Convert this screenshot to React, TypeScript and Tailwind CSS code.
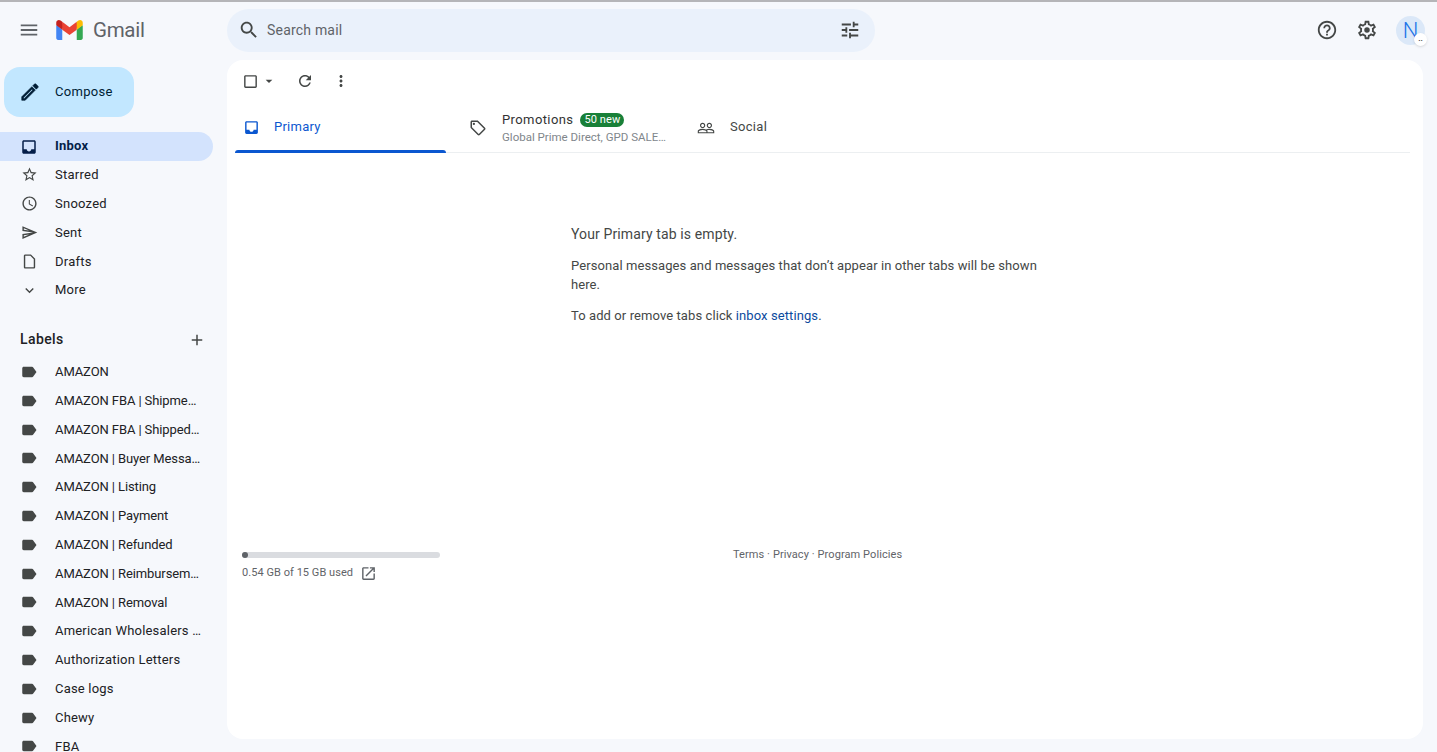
type IconProps = { d: string; className?: string };

function Icon({ d, className = "" }: IconProps) {
  return (
    <svg className={className} viewBox="0 0 24 24" fill="currentColor">
      <path d={d} />
    </svg>
  );
}

const paths = {
  menu: "M3 18h18v-2H3v2zm0-5h18v-2H3v2zm0-7v2h18V6H3z",
  search:
    "M15.5 14h-.79l-.28-.27C15.41 12.59 16 11.11 16 9.5 16 5.91 13.09 3 9.5 3S3 5.91 3 9.5 5.91 16 9.5 16c1.61 0 3.09-.59 4.23-1.57l.27.28v.79l5 4.99L20.49 19l-4.99-5zm-6 0C7.01 14 5 11.99 5 9.5S7.01 5 9.5 5 14 7.01 14 9.5 11.99 14 9.5 14z",
  tune: "M3 17v2h6v-2H3zM3 5v2h10V5H3zm10 16v-2h8v-2h-8v-2h-2v6h2zM7 9v2H3v2h4v2h2V9H7zm14 4v-2H11v2h10zm-6-4h2V7h4V5h-4V3h-2v6z",
  inbox:
    "M19 3H4.99c-1.11 0-1.98.89-1.98 2L3 19c0 1.1.88 2 1.99 2H19c1.1 0 2-.9 2-2V5c0-1.11-.9-2-2-2zm0 12h-4c0 1.66-1.35 3-3 3s-3-1.34-3-3H4.99V5H19v10z",
  star: "M22 9.24l-7.19-.62L12 2 9.19 8.63 2 9.24l5.46 4.73L5.82 21 12 17.27 18.18 21l-1.63-7.03L22 9.24zM12 15.4l-3.76 2.27 1-4.28-3.32-2.88 4.38-.38L12 6.1l1.71 4.04 4.38.38-3.32 2.88 1 4.28L12 15.4z",
  clock:
    "M11.99 2C6.47 2 2 6.48 2 12s4.47 10 9.99 10C17.52 22 22 17.52 22 12S17.52 2 11.99 2zM12 20c-4.42 0-8-3.58-8-8s3.58-8 8-8 8 3.58 8 8-3.58 8-8 8zm.5-13H11v6l5.25 3.15.75-1.23-4.5-2.67z",
  send: "M4.01 6.03l7.51 3.22-7.52-1 .01-2.22m7.5 8.72L4 17.97v-2.22l7.51-1M2.01 3L2 10l15 2-15 2 .01 7L23 12 2.01 3z",
  draft: "M6 2c-1.1 0-2 .9-2 2v16c0 1.1.9 2 2 2h12c1.1 0 2-.9 2-2V8l-6-6H6zm0 18V4h7.17L18 8.83V20H6z",
  more: "M16.59 8.59L12 13.17 7.41 8.59 6 10l6 6 6-6z",
  add: "M19 13h-6v6h-2v-6H5v-2h6V5h2v6h6v2z",
  label:
    "M17.63 5.84C17.27 5.33 16.67 5 16 5L5 5.01C3.9 5.01 3 5.9 3 7v10c0 1.1.9 1.99 2 1.99L16 19c.67 0 1.27-.33 1.63-.84L22 12l-4.37-6.16z",
  edit: "M3 17.25V21h3.75L17.81 9.94l-3.75-3.75L3 17.25zM5.92 19H5v-.92l9.06-9.06.92.92L5.92 19zM20.71 5.63l-2.34-2.34c-.2-.2-.45-.29-.71-.29s-.51.1-.7.29l-1.83 1.83 3.75 3.75 1.83-1.83c.39-.39.39-1.02 0-1.41z",
  refresh:
    "M17.65 6.35C16.2 4.9 14.21 4 12 4c-4.42 0-7.99 3.58-7.99 8s3.57 8 7.99 8c3.73 0 6.84-2.55 7.73-6h-2.08c-.82 2.33-3.04 4-5.65 4-3.31 0-6-2.69-6-6s2.69-6 6-6c1.66 0 3.14.69 4.22 1.78L13 11h7V4l-2.35 2.35z",
  dots: "M12 8c1.1 0 2-.9 2-2s-.9-2-2-2-2 .9-2 2 .9 2 2 2zm0 2c-1.1 0-2 .9-2 2s.9 2 2 2 2-.9 2-2-.9-2-2-2zm0 6c-1.1 0-2 .9-2 2s.9 2 2 2 2-.9 2-2-.9-2-2-2z",
  checkbox:
    "M19 5v14H5V5h14m0-2H5c-1.1 0-2 .9-2 2v14c0 1.1.9 2 2 2h14c1.1 0 2-.9 2-2V5c0-1.1-.9-2-2-2z",
  caret: "M7 10l5 5 5-5z",
  tag: "M21.41 11.58l-9-9C12.05 2.22 11.55 2 11 2H4c-1.1 0-2 .9-2 2v7c0 .55.22 1.05.59 1.42l9 9c.36.36.86.58 1.41.58s1.05-.22 1.41-.59l7-7c.37-.36.59-.86.59-1.41s-.23-1.06-.59-1.42zM13 20.01L4 11V4h7v-.01l9 9-7 7.02zM6.5 5a1.5 1.5 0 1 0 0 3 1.5 1.5 0 0 0 0-3z",
  people:
    "M16.5 13c-1.2 0-3.07.34-4.5 1-1.43-.67-3.3-1-4.5-1C5.33 13 1 14.08 1 16.25V19h22v-2.75c0-2.17-4.33-3.25-6.5-3.25zm-4 4.5h-10v-1.25c0-.54 2.56-1.75 5-1.75s5 1.21 5 1.75v1.25zm9 0H14v-1.25c0-.46-.2-.86-.52-1.22.88-.3 1.96-.53 3.02-.53 2.44 0 5 1.21 5 1.75v1.25zM7.5 12c1.93 0 3.5-1.57 3.5-3.5S9.43 5 7.5 5 4 6.57 4 8.5 5.57 12 7.5 12zm0-5.5c1.1 0 2 .9 2 2s-.9 2-2 2-2-.9-2-2 .9-2 2-2zm9 5.5c1.93 0 3.5-1.57 3.5-3.5S18.43 5 16.5 5 13 6.57 13 8.5s1.57 3.5 3.5 3.5zm0-5.5c1.1 0 2 .9 2 2s-.9 2-2 2-2-.9-2-2 .9-2 2-2z",
  help: "M11 18h2v-2h-2v2zm1-16C6.48 2 2 6.48 2 12s4.48 10 10 10 10-4.48 10-10S17.52 2 12 2zm0 18c-4.41 0-8-3.59-8-8s3.59-8 8-8 8 3.59 8 8-3.59 8-8 8zm0-14c-2.21 0-4 1.79-4 4h2c0-1.1.9-2 2-2s2 .9 2 2c0 2-3 1.75-3 5h2c0-2.25 3-2.5 3-5 0-2.21-1.79-4-4-4z",
  gear: "M19.43 12.98c.04-.32.07-.64.07-.98 0-.34-.03-.66-.07-.98l2.11-1.65c.19-.15.24-.42.12-.64l-2-3.46c-.09-.16-.26-.25-.44-.25-.06 0-.12.01-.17.03l-2.49 1c-.52-.4-1.08-.73-1.69-.98l-.38-2.65C14.46 2.18 14.25 2 14 2h-4c-.25 0-.46.18-.49.42l-.38 2.65c-.61.25-1.17.59-1.69.98l-2.49-1c-.06-.02-.12-.03-.18-.03-.17 0-.34.09-.43.25l-2 3.46c-.13.22-.07.49.12.64l2.11 1.65c-.04.32-.07.65-.07.98 0 .33.03.66.07.98l-2.11 1.65c-.19.15-.24.42-.12.64l2 3.46c.09.16.26.25.44.25.06 0 .12-.01.17-.03l2.49-1c.52.4 1.08.73 1.69.98l.38 2.65c.03.24.24.42.49.42h4c.25 0 .46-.18.49-.42l.38-2.65c.61-.25 1.17-.59 1.69-.98l2.49 1c.06.02.12.03.18.03.17 0 .34-.09.43-.25l2-3.46c.12-.22.07-.49-.12-.64l-2.11-1.65zm-1.98-1.71c.04.31.05.52.05.73 0 .21-.02.43-.05.73l-.14 1.13.89.7 1.08.84-.7 1.21-1.27-.51-1.04-.42-.9.68c-.43.32-.84.56-1.25.73l-1.06.43-.16 1.13-.2 1.35h-1.4l-.19-1.35-.16-1.13-1.06-.43c-.43-.18-.83-.41-1.23-.71l-.91-.7-1.06.43-1.27.51-.7-1.21 1.08-.84.89-.7-.14-1.13c-.03-.31-.05-.54-.05-.74s.02-.43.05-.73l.14-1.13-.89-.7-1.08-.84.7-1.21 1.27.51 1.04.42.9-.68c.43-.32.84-.56 1.25-.73l1.06-.43.16-1.13.2-1.35h1.39l.19 1.35.16 1.13 1.06.43c.43.18.83.41 1.23.71l.91.7 1.06-.43 1.27-.51.7 1.21-1.07.85-.89.7.14 1.13zM12 9a3 3 0 1 0 0 6 3 3 0 0 0 0-6z",
  open: "M19 19H5V5h7V3H5c-1.11 0-2 .9-2 2v14c0 1.1.89 2 2 2h14c1.1 0 2-.9 2-2v-7h-2v7zM14 3v2h3.59l-9.83 9.83 1.41 1.41L19 6.41V10h2V3h-7z",
};

const navItems = [
  { name: "Starred", icon: paths.star },
  { name: "Snoozed", icon: paths.clock },
  { name: "Sent", icon: paths.send },
  { name: "Drafts", icon: paths.draft },
  { name: "More", icon: paths.more },
];

const labels = [
  "AMAZON",
  "AMAZON FBA | Shipment Updates",
  "AMAZON FBA | Shipped Orders",
  "AMAZON | Buyer Messages",
  "AMAZON | Listing",
  "AMAZON | Payment",
  "AMAZON | Refunded",
  "AMAZON | Reimbursements",
  "AMAZON | Removal",
  "American Wholesalers Group",
  "Authorization Letters",
  "Case logs",
  "Chewy",
  "FBA",
];

function GmailLogo() {
  return (
    <svg className="w-[27px] h-[20px]" viewBox="0 0 256 193">
      <path fill="#4285F4" d="M58.182 192.05V93.14L27.507 65.077 0 49.504v125.091c0 9.658 7.825 17.455 17.455 17.455h40.727Z" />
      <path fill="#34A853" d="M197.818 192.05h40.727c9.659 0 17.455-7.826 17.455-17.455V49.505l-31.156 17.837-27.026 25.798v98.91Z" />
      <path fill="#EA4335" d="m58.182 93.14-4.174-38.647 4.174-36.989L128 69.868l69.818-52.364 4.67 34.992-4.67 40.644L128 145.504z" />
      <path fill="#FBBC04" d="M197.818 17.504V93.14L256 49.504V26.231c0-21.585-24.64-33.89-41.89-20.945l-16.292 12.218Z" />
      <path fill="#C5221F" d="m0 49.504 26.759 20.07L58.182 93.14V17.504L41.89 5.286C24.61-7.66 0 4.646 0 26.23v23.273Z" />
    </svg>
  );
}

function Sidebar() {
  return (
    <aside className="w-[227px] shrink-0 h-full overflow-hidden">
      <button className="ml-1 mt-[7px] w-[130px] h-[50px] rounded-2xl bg-[#c2e7ff] flex items-center text-[13px] text-[#001d35] tracking-[0.3px]">
        <Icon d={paths.edit} className="w-[22px] h-[22px] ml-[15px] mr-[14px] text-[#001d35] stroke-current stroke-[0.7]" />
        Compose
      </button>

      <nav className="mt-[15px] text-[13px] text-[#202124]">
        <div className="w-[213px] h-[29px] pb-[2px] rounded-r-full bg-[#d3e3fd] flex items-center font-bold text-[#041e49] tracking-[0.2px]">
          <Icon d={paths.inbox} className="w-[18px] h-[18px] ml-5 mr-[17px] mt-[2px]" />
          Inbox
        </div>
        {navItems.map((item) => (
          <div key={item.name} className="h-[28.8px] pb-px flex items-center tracking-[0.25px]">
            <Icon d={item.icon} className="w-[17px] h-[17px] ml-[21px] mr-[17px] text-[#444746]" />
            {item.name}
          </div>
        ))}
      </nav>

      <div className="mt-[21px] h-[28px] pl-5 pr-[21px] flex items-center justify-between">
        <span className="text-[14px] font-medium text-[#202124] tracking-[0.4px]">Labels</span>
        <Icon d={paths.add} className="w-[18px] h-[18px] text-[#444746]" />
      </div>

      <div className="mt-[3.6px] text-[13px] text-[#202124]">
        {labels.map((name) => (
          <div key={name} className="h-[28.8px] flex items-center">
            <Icon d={paths.label} className="w-[18px] h-[18px] shrink-0 ml-5 mr-[17px] text-[#444746]" />
            <span className={`w-[146px] whitespace-nowrap overflow-hidden text-ellipsis ${name.startsWith("AMAZON") ? "tracking-[-0.1px]" : "tracking-[0.2px]"}`}>
              {name}
            </span>
          </div>
        ))}
      </div>
    </aside>
  );
}

function Header() {
  return (
    <header className="h-[58px] pb-[2px] flex items-center shrink-0">
      <div className="w-[227px] shrink-0 flex items-center">
        <Icon d={paths.menu} className="w-[22px] h-[22px] ml-[18px] text-[#5f6368]" />
        <div className="ml-[16px] flex">
          <GmailLogo />
        </div>
        <span className="ml-[10px] text-[20.5px] leading-none text-[#5f6368] tracking-[-0.3px]">Gmail</span>
      </div>
      <div className="w-[648px] h-[43px] rounded-full bg-[#eaf1fb] flex items-center">
        <Icon d={paths.search} className="w-[22px] h-[22px] ml-[11px] text-[#444746]" />
        <span className="ml-[7px] text-[14px] text-[#5f6368] tracking-[0.2px]">Search mail</span>
        <Icon d={paths.tune} className="w-[22px] h-[22px] ml-auto mr-[14px] text-[#444746]" />
      </div>
      <div className="ml-auto flex items-center">
        <Icon d={paths.help} className="w-[22px] h-[22px] text-[#444746]" />
        <Icon d={paths.gear} className="w-[22px] h-[22px] ml-[18px] text-[#444746]" />
        <div className="relative w-[29px] h-[29px] ml-[18px] mr-[12px] rounded-full bg-[#dbe8f8] flex items-center justify-center text-[22px] font-light text-[#1a73e8]">
          N
          <span className="absolute right-[-2px] bottom-[-1px] w-[13px] h-[13px] rounded-full bg-white shadow flex items-center justify-center text-[8px] font-bold leading-none text-[#444746]">
            ..
          </span>
        </div>
      </div>
    </header>
  );
}

function Tabs() {
  return (
    <div className="ml-2 mr-[13px] h-[50px] flex border-b border-[#eceff1] shrink-0">
      <div className="relative w-[211px] pb-[2px] flex items-center text-[13px] text-[#0b57d0] tracking-[0.25px]">
        <Icon d={paths.inbox} className="w-[17px] h-[17px] ml-2 mr-[14px] mt-[2px]" />
        Primary
        <span className="absolute left-0 right-0 bottom-[-1px] h-[3px] rounded-t-[3px] bg-[#0b57d0]" />
      </div>
      <div className="w-[228px] flex items-center">
        <Icon d={paths.tag} className="w-[18px] h-[18px] ml-[23px] mr-[15px] text-[#444746]" />
        <div className="mt-[1px]">
          <div className="flex items-center">
            <span className="text-[13px] text-[#333] tracking-[0.4px]">Promotions</span>
            <span className="ml-[7px] h-[14px] px-[4px] rounded-full bg-[#188038] text-white text-[11px] leading-[14px] tracking-[0.1px]">50 new</span>
          </div>
          <div className="mt-[-1px] w-[166px] text-[11.5px] text-[#80868b] whitespace-nowrap overflow-hidden text-ellipsis">Global Prime Direct, GPD SALES Team</div>
        </div>
      </div>
      <div className="pb-[2px] flex items-center text-[13px] text-[#444746] tracking-[0.3px]">
        <Icon d={paths.people} className="w-[18px] h-[18px] ml-[23px] mr-[15px] mt-[2px]" />
        Social
      </div>
    </div>
  );
}

function Main() {
  return (
    <main className="flex-1 mr-[14px] mb-[13px] rounded-2xl bg-white flex flex-col">
      <div className="h-[42px] mb-px flex items-center text-[#444746] shrink-0">
        <Icon d={paths.checkbox} className="w-[17px] h-[17px] ml-[15px]" />
        <Icon d={paths.caret} className="w-[16px] h-[16px] ml-[2px]" />
        <Icon d={paths.refresh} className="w-[18px] h-[18px] ml-[19px]" />
        <Icon d={paths.dots} className="w-[18px] h-[18px] ml-[18px]" />
      </div>
      <Tabs />

      <div className="ml-[344px] mt-[72px] w-[480px] text-[13px] leading-[19px] text-[#444746] tracking-[0.09px]">
        <p className="text-[14px] tracking-[0.12px]">Your Primary tab is empty.</p>
        <p className="mt-[12px]">Personal messages and messages that don’t appear in other tabs will be shown here.</p>
        <p className="mt-[12px]">
          To add or remove tabs click <span className="text-[#0b4a9e]">inbox settings</span>.
        </p>
      </div>

      <div className="mt-[227px] ml-[15px] flex">
        <div className="w-[198px]">
          <div className="h-[6px] rounded-full bg-[#dadce0]">
            <div className="w-[6px] h-[6px] rounded-full bg-[#5f6368]" />
          </div>
          <div className="mt-[6px] h-[18px] pt-px flex items-center text-[11px] text-[#5f6368] tracking-[0.05px]">
            0.54 GB of 15 GB used
            <Icon d={paths.open} className="w-[17px] h-[17px] ml-[7px]" />
          </div>
        </div>
        <div className="ml-[293px] mt-[-5px] text-[11px] leading-[16px] text-[#5f6368] tracking-[0.08px]">Terms · Privacy · Program Policies</div>
      </div>
    </main>
  );
}

export default function App() {
  return (
    <div className="w-[1437px] h-[752px] overflow-hidden bg-[#f6f8fc] flex flex-col font-['Roboto',sans-serif]">
      <div className="h-[2px] bg-[#b5b5b8] shrink-0" />
      <Header />
      <div className="flex-1 min-h-0 flex">
        <Sidebar />
        <Main />
      </div>
    </div>
  );
}
